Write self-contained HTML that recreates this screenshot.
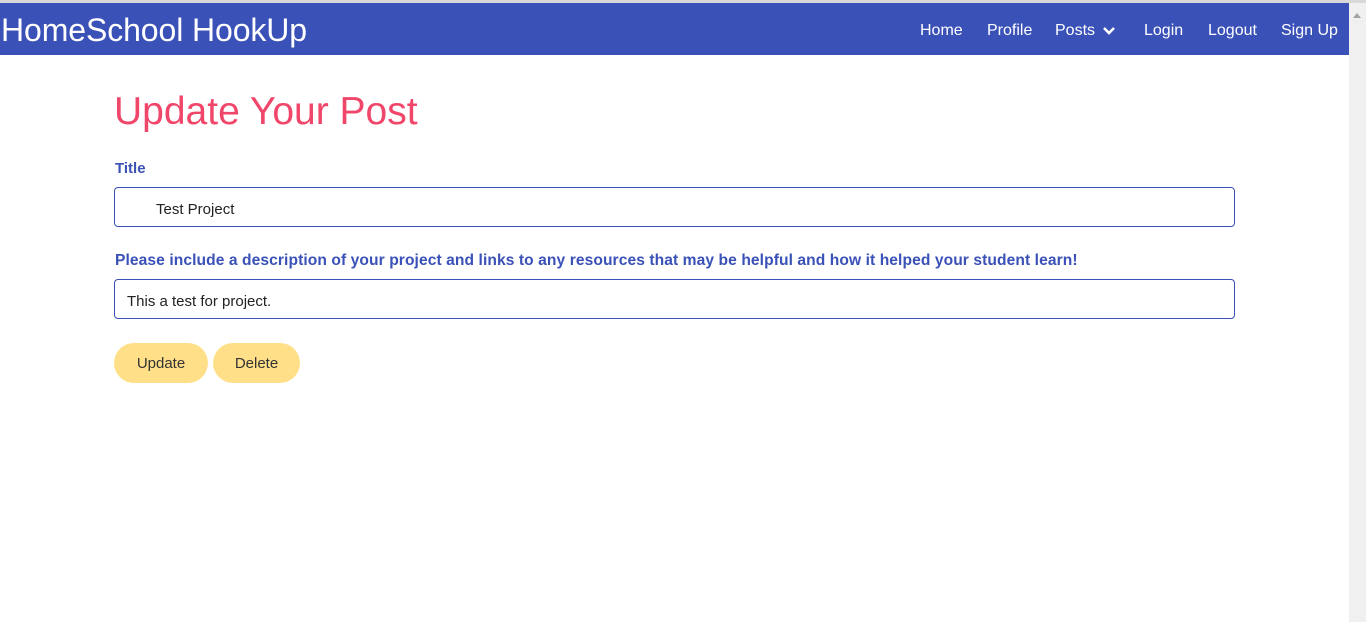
<!DOCTYPE html>
<html><head><style>
body{margin:0;width:1366px;height:622px;overflow:hidden;font-family:"Liberation Sans",sans-serif;background:#fff;position:relative}
.top{position:absolute;left:0;top:0;width:1366px;height:3px;background:#d8d8d8}
.sb{position:absolute;right:0;top:3px;width:17px;height:619px;background:#f0f0f0}
.sb:before{content:"";position:absolute;left:4px;top:10px;border:4px solid transparent;border-bottom:5px solid #a3a3a3;border-top:0}
nav{position:absolute;left:0;top:3px;width:1349px;height:52px;background:#3a51b8;color:#fff}
.brand{position:absolute;left:1px;top:9px;font-size:32px;letter-spacing:-0.1px}
.nv{position:absolute;top:19px;font-size:16px}
h1{position:absolute;left:114px;top:90px;margin:0;font-weight:normal;font-size:39px;color:#f0466a}
label{position:absolute;left:115px;font-weight:bold;font-size:15px;color:#3a51b8}
.in{position:absolute;left:114px;width:1119px;height:38px;border:1px solid #3a51b8;border-radius:4px;font-size:15px;color:#222;box-sizing:content-box}
.in span{position:absolute;top:13px}
.btn{position:absolute;top:343px;height:40px;background:#ffdf88;border-radius:20px;font-size:15px;color:#333;text-align:center;line-height:42px}
</style></head><body>
<div class="top"></div>
<nav>
<div class="brand">HomeSchool HookUp</div>
<div class="nv" style="left:920px">Home</div>
<div class="nv" style="left:987px">Profile</div>
<div class="nv" style="left:1055px">Posts</div>
<svg style="position:absolute;left:1102px;top:23px" width="14" height="10" viewBox="0 0 14 10"><path d="M2 2l5 5 5-5" stroke="#fff" stroke-width="2.6" fill="none"/></svg>
<div class="nv" style="left:1144px">Login</div>
<div class="nv" style="left:1208px">Logout</div>
<div class="nv" style="left:1281px">Sign Up</div>
</nav>
<div class="sb"></div>
<h1>Update Your Post</h1>
<label style="top:160px">Title</label>
<div class="in" style="top:187px"><span style="left:41px">Test Project</span></div>
<label style="top:252px;font-size:15.6px;letter-spacing:0.08px">Please include a description of your project and links to any resources that may be helpful and how it helped your student learn!</label>
<div class="in" style="top:279px"><span style="left:12px">This a test for project.</span></div>
<div class="btn" style="left:114px;width:94px">Update</div>
<div class="btn" style="left:213px;width:87px">Delete</div>
</body></html>
